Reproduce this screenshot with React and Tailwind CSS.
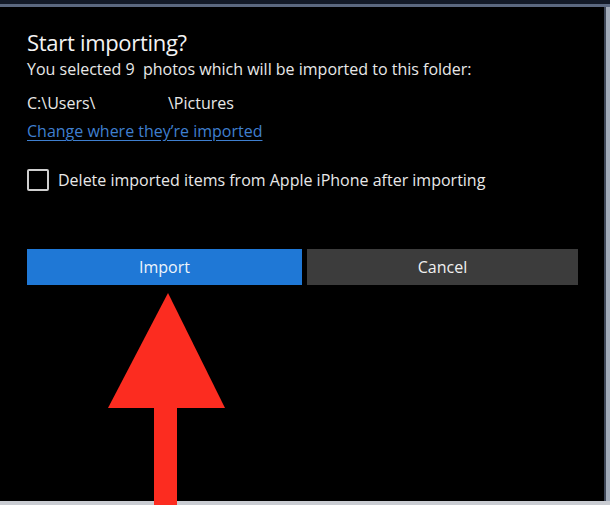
import React from 'react';

const App = () => {
  return (
    <div
      className="relative w-[610px] h-[505px] bg-black overflow-hidden flex flex-col"
      style={{ fontFamily: '"Open Sans", "Noto Sans", sans-serif' }}
    >
      {/* window top edge */}
      <div className="h-[4px] bg-[#131a28]" />
      <div className="h-[3px] bg-[#5b6880]" />

      <div className="flex flex-1">
        {/* dialog body */}
        <div className="flex-1 pl-[27px] pt-[21px]">
          <h1 className="text-[22px] leading-[29px] text-[#f4f4f4] tracking-[-0.3px]">Start importing?</h1>
          <p className="mt-[2px] text-[16px] leading-[20px] text-[#e8e8e8]">
            You selected 9&nbsp; photos which will be imported to this folder:
          </p>

          <div className="mt-[14px] flex text-[16px] leading-[20px] text-[#e8e8e8]">
            <span className="w-[141px]">C:\Users\</span>
            <span>\Pictures</span>
          </div>

          <a
            href="#"
            className="mt-[8px] block w-fit text-[16px] leading-[20px] text-[#3f7fcf] underline underline-offset-[3px]"
          >
            Change where they’re imported
          </a>

          {/* checkbox */}
          <label className="mt-[28px] flex items-center gap-[9px]">
            <span className="w-[22px] h-[22px] border-2 border-[#cfcfcf] rounded-[2px]" />
            <span className="text-[16px] leading-[20px] text-[#e8e8e8]">
              Delete imported items from Apple iPhone after importing
            </span>
          </label>

          {/* buttons */}
          <div className="mt-[58px] flex gap-[5px]">
            <button className="w-[275px] h-[36px] bg-[#1f78d6] text-[16px] text-[#eef4fb]">Import</button>
            <button className="w-[271px] h-[36px] bg-[#3c3c3c] text-[16px] text-[#f0f0f0]">Cancel</button>
          </div>
        </div>

        {/* window right edge */}
        <div className="w-[2px] bg-[#3e4656]" />
        <div className="w-[4px] bg-[#a3acba]" />
      </div>

      {/* window bottom edge */}
      <div className="h-[4px] bg-[#c9ccd2]" />

      {/* red annotation arrow */}
      <svg className="absolute left-0 top-0 pointer-events-none" width="610" height="505" viewBox="0 0 610 505">
        <polygon points="168,293 108,408 225,408" fill="#fc2c20" />
        <rect x="154" y="407" width="23" height="98" fill="#fc2c20" />
      </svg>
    </div>
  );
};

export default App;
